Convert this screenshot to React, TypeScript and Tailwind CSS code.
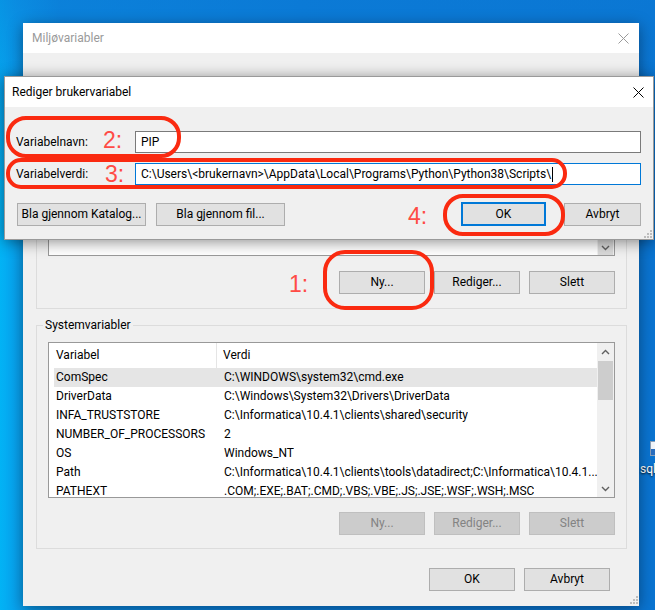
import React from 'react'

const CloseX = ({ color }: { color: string }) => (
  <svg width="11" height="11" viewBox="0 0 11 11">
    <path d="M0.5 0.5L10.5 10.5M10.5 0.5L0.5 10.5" stroke={color} strokeWidth="1" fill="none" />
  </svg>
)

const Grip = () => (
  <svg width="9" height="9" viewBox="0 0 9 9" fill="#bdbdbd">
    <rect x="7" y="1" width="2" height="2" />
    <rect x="4" y="4" width="2" height="2" />
    <rect x="7" y="4" width="2" height="2" />
    <rect x="1" y="7" width="2" height="2" />
    <rect x="4" y="7" width="2" height="2" />
    <rect x="7" y="7" width="2" height="2" />
  </svg>
)

const Chevron = ({ up }: { up?: boolean }) => (
  <svg width="9" height="6" viewBox="0 0 9 6">
    <path d={up ? 'M1 5L4.5 1.5L8 5' : 'M1 1L4.5 4.5L8 1'} stroke="#606060" strokeWidth="1.4" fill="none" />
  </svg>
)

const Button = ({ label, className = '' }: { label: string; className?: string }) => (
  <div className={'h-[23px] flex items-center justify-center border border-[#adadad] bg-[#e1e1e1] text-black ' + className}>
    {label}
  </div>
)

const DisabledButton = ({ label }: { label: string }) => (
  <div className="h-[23px] w-[86px] flex items-center justify-center border border-[#bfbfbf] bg-[#cccccc] text-[#838383]">
    {label}
  </div>
)

const rows = [
  ['ComSpec', 'C:\\WINDOWS\\system32\\cmd.exe'],
  ['DriverData', 'C:\\Windows\\System32\\Drivers\\DriverData'],
  ['INFA_TRUSTSTORE', 'C:\\Informatica\\10.4.1\\clients\\shared\\security'],
  ['NUMBER_OF_PROCESSORS', '2'],
  ['OS', 'Windows_NT'],
  ['Path', 'C:\\Informatica\\10.4.1\\clients\\tools\\datadirect;C:\\Informatica\\10.4.1...'],
  ['PATHEXT', '.COM;.EXE;.BAT;.CMD;.VBS;.VBE;.JS;.JSE;.WSF;.WSH;.MSC'],
]

// red annotation marks drawn on top of the screenshot
const Ring = ({ className }: { className: string }) => (
  <div className={'absolute border-[4px] border-[#fa2a10] ' + className} />
)

const Num = ({ text, className }: { text: string; className: string }) => (
  <div className={"absolute font-['Liberation_Sans',Arial,sans-serif] text-[23px] leading-none text-[#ff4b45] " + className}>{text}</div>
)

export default function App() {
  return (
    <div className="relative w-[655px] h-[610px] overflow-hidden font-['Roboto','Liberation_Sans',sans-serif] text-[12px] leading-[15px] text-black bg-[linear-gradient(180deg,rgba(12,122,214,0.55)_0%,rgba(12,122,214,0)_30%),linear-gradient(90deg,#02b3f5_0px,#08a2ee_16px,#0a88de_60px,#0a7ad6_300px,#0a74d1_655px)]">
      {/* desktop icon peeking out on the right */}
      <div className="absolute left-[640px] top-[441px] flex flex-col items-start">
        <div className="ml-[10px] w-[13px] h-[15px] bg-[#f4f7fb] border border-[#8aa0b8] flex items-end justify-start">
          <div className="w-[5px] h-[6px] bg-[#2a6fc0]" />
        </div>
        <div className="mt-[6px] text-white whitespace-nowrap text-shadow-[0_1px_2px_rgba(0,0,0,0.9)]">sqldeveloper</div>
      </div>

      {/* Miljøvariabler (inactive, behind) */}
      <div className="absolute left-[23px] top-[23px] w-[616px] h-[583px] flex flex-col bg-[#f0f0f0] shadow-[0_3px_14px_rgba(0,0,0,0.4)]">
        <div className="h-[30px] bg-white flex items-center justify-between pl-[9px] pr-[10px] shrink-0">
          <span className="text-[#9a9a9a]">Miljøvariabler</span>
          <CloseX color="#9a9a9a" />
        </div>

        {/* user variables group, mostly hidden behind the edit dialog */}
        <div className="ml-[13px] mt-[34px] w-[591px] border border-[#dcdcdc] pt-[21px] px-[11px] pb-[14px]">
          <div className="h-[147px] border border-[#999] bg-white flex">
            <div className="flex-1" />
            <div className="w-[17px] bg-[#f0f0f0] flex flex-col justify-between items-center">
              <div className="h-[17px] flex items-center"><Chevron up /></div>
              <div className="h-[15px] w-[15px] flex items-center justify-center bg-[#dadada]"><Chevron /></div>
            </div>
          </div>
          <div className="mt-[15px] flex justify-end gap-[9px]">
            <Button label="Ny..." className="w-[86px]" />
            <Button label="Rediger..." className="w-[86px]" />
            <Button label="Slett" className="w-[86px]" />
          </div>
        </div>

        <div className="relative ml-[13px] mt-[16px] w-[591px] border border-[#dcdcdc] pt-[16px] px-[11px] pb-[13px]">
          <span className="absolute -top-[8px] left-[6px] px-[2px] bg-[#f0f0f0]">Systemvariabler</span>
          <div className="h-[156px] border border-[#999] bg-white flex overflow-hidden">
            <div className="flex-1 flex flex-col overflow-hidden">
              <div className="h-[25px] shrink-0 flex items-center">
                <div className="w-[168px] h-full flex items-center pl-[7px] border-r border-[#e5e5e5]">Variabel</div>
                <div className="pl-[6px]">Verdi</div>
              </div>
              {rows.map(([name, value], i) => (
                <div
                  key={name}
                  className={'h-[19px] shrink-0 ml-[5px] pl-[2px] flex items-center whitespace-nowrap ' + (i === 0 ? 'bg-[#e5e5e5]' : '')}
                >
                  <div className="w-[168px] shrink-0">{name}</div>
                  <div className="overflow-hidden">{value}</div>
                </div>
              ))}
            </div>
            <div className="w-[17px] bg-[#f0f0f0] flex flex-col items-center shrink-0">
              <div className="h-[17px] flex items-center"><Chevron up /></div>
              <div className="mt-[1px] w-[15px] h-[39px] bg-[#cdcdcd]" />
              <div className="flex-1" />
              <div className="h-[17px] flex items-center"><Chevron /></div>
            </div>
          </div>
          <div className="mt-[14px] flex justify-end gap-[9px]">
            <DisabledButton label="Ny..." />
            <DisabledButton label="Rediger..." />
            <DisabledButton label="Slett" />
          </div>
        </div>

        <div className="mt-[19px] pr-[29px] flex justify-end gap-[9px]">
          <Button label="OK" className="w-[86px]" />
          <Button label="Avbryt" className="w-[86px]" />
        </div>
        <div className="flex-1 flex items-end justify-end pr-[1px] pb-[2px]">
          <Grip />
        </div>
      </div>

      {/* Rediger brukervariabel (active, on top) */}
      <div className="absolute left-[4px] top-[76px] w-[650px] h-[164px] flex flex-col border border-[#9a9a9a] bg-[#f0f0f0] shadow-[0_2px_14px_rgba(0,0,0,0.45)]">
        <div className="h-[30px] bg-white flex items-center justify-between pl-[7px] pr-[9px] shrink-0">
          <span>Rediger brukervariabel</span>
          <CloseX color="#000" />
        </div>
        <div className="pt-[24px] pl-[11px] pr-[12px]">
          <div className="flex items-center h-[22px]">
            <div className="w-[119px] shrink-0">Variabelnavn:</div>
            <div className="flex-1 h-full border border-[#7a7a7a] bg-white flex items-center pl-[5px]">PIP</div>
          </div>
          <div className="mt-[10px] flex items-center h-[22px]">
            <div className="w-[119px] shrink-0">Variabelverdi:</div>
            <div className="flex-1 h-full border border-[#0078d7] bg-white flex items-center pl-[5px] whitespace-nowrap">
              C:\Users\&lt;brukernavn&gt;\AppData\Local\Programs\Python\Python38\Scripts\
              <span className="ml-[1px] w-[1px] h-[15px] bg-black" />
            </div>
          </div>
          <div className="mt-[17px] flex items-center">
            <Button label="Bla gjennom Katalog..." className="ml-[1px] w-[129px]" />
            <Button label="Bla gjennom fil..." className="ml-[10px] w-[129px]" />
            <div className="flex-1" />
            <div className="w-[85px] h-[24px] flex items-center justify-center border-2 border-[#0078d7] bg-[#e1e1e1]">OK</div>
            <Button label="Avbryt" className="ml-[18px] w-[77px]" />
          </div>
        </div>
        <div className="flex-1 flex items-end justify-end pr-[1px] pb-[1px]">
          <Grip />
        </div>
      </div>

      {/* annotations */}
      <Ring className="left-[6px] top-[116px] w-[175px] h-[42px] rounded-[20px]" />
      <Ring className="left-[6px] top-[158px] w-[561px] h-[31px] rounded-[15px]" />
      <Ring className="left-[443px] top-[194px] w-[122px] h-[42px] rounded-[20px]" />
      <Ring className="left-[323px] top-[250px] w-[111px] h-[60px] rounded-[22px]" />
      <Num text="2:" className="left-[103px] top-[129px]" />
      <Num text="3:" className="left-[105px] top-[163px]" />
      <Num text="4:" className="left-[408px] top-[205px]" />
      <Num text="1:" className="left-[289px] top-[273px]" />
    </div>
  )
}
